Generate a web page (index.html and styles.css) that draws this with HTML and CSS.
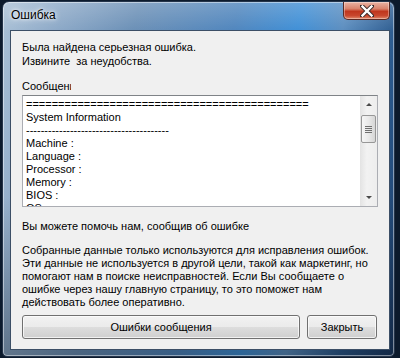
FILE: index.html
```html
<!DOCTYPE html>
<html lang="ru">
<head>
  <meta charset="UTF-8">
  <title>Ошибка</title>
  <link rel="stylesheet" href="styles.css">
</head>
<body>
  <div class="window">
    <div class="titlebar">
      <span class="title">Ошибка</span>
      <div class="close">
        <svg width="14" height="12" viewBox="0 0 14 12">
          <path d="M2 1 L12 11 M12 1 L2 11" stroke="#3a2a2a" stroke-width="4.2" stroke-linecap="square"/>
          <path d="M2.5 1.5 L11.5 10.5 M11.5 1.5 L2.5 10.5" stroke="#fff" stroke-width="2.4" stroke-linecap="square"/>
        </svg>
      </div>
    </div>
    <div class="client">
      <p class="intro">Была найдена серьезная ошибка.<br>Извините&nbsp; за неудобства.</p>
      <div class="label">Сообщения</div>
      <div class="textbox">
        <pre class="log">============================================
System Information
---------------------------------------
Machine :
Language :
Processor :
Memory :
BIOS :
OS :</pre>
        <div class="scrollbar">
          <div class="arrow up"></div>
          <div class="track">
            <div class="thumb"><span></span><span></span><span></span><span></span></div>
          </div>
          <div class="arrow down"></div>
        </div>
      </div>
      <p class="help">Вы можете помочь нам, сообщив об ошибке</p>
      <p class="info">Собранные данные только используются для исправления ошибок.<br>Эти данные не используется в другой цели, такой как маркетинг, но<br>помогают нам в поиске неисправностей. Если Вы сообщаете о<br>ошибке через нашу главную страницу, то это поможет нам<br>действовать более оперативно.</p>
      <div class="buttons">
        <button class="btn wide">Ошибки сообщения</button>
        <button class="btn">Закрыть</button>
      </div>
    </div>
  </div>
</body>
</html>
```

FILE: styles.css
```css
body {
  margin: 0;
  background: #0c1a2c;
  font-family: "Liberation Sans", Arial, sans-serif;
  font-size: 11px;
  color: #000;
}

.window {
  box-sizing: border-box;
  width: 393px;
  height: 356px;
  margin: 1px 0 0 2px;
  display: flex;
  flex-direction: column;
  border: 1px solid #24344a;
  border-radius: 7px 7px 5px 5px;
  box-shadow: inset 0 0 0 1px rgba(255, 255, 255, 0.45);
  background:
    linear-gradient(to bottom, rgba(255, 255, 255, 0.2), rgba(255, 255, 255, 0) 30px, rgba(0, 0, 0, 0) 55%, rgba(0, 0, 0, 0.3)),
    linear-gradient(100deg, #a9c0d6 0%, #8eaac8 12%, #6a8fb6 30%, #4f85bd 52%, #3f8fd6 66%, #5b8dbf 76%, #2b5a8e 88%, #1b3a64 100%);
}

.titlebar {
  height: 28px;
  display: flex;
  justify-content: space-between;
  align-items: flex-start;
}

.title {
  font-size: 12px;
  line-height: 15px;
  padding: 6px 0 0 8px;
  text-shadow: 0 0 6px #fff, 0 0 3px rgba(255, 255, 255, 0.9);
}

.close {
  width: 47px;
  height: 18px;
  margin-right: 4px;
  box-sizing: border-box;
  border: 1px solid #5a2a24;
  border-top: none;
  border-radius: 0 0 5px 5px;
  display: flex;
  align-items: center;
  justify-content: center;
  background: linear-gradient(to bottom, #e9b3a4 0%, #d9826b 40%, #c0361d 55%, #c8472d 80%, #e08a6c 100%);
  box-shadow: inset 0 0 0 1px rgba(255, 255, 255, 0.35);
}

.client {
  box-sizing: border-box;
  width: 380px;
  height: 320px;
  margin: 0 4px 6px 7px;
  padding: 9px 11px 0 11px;
  background: #f0f0f0;
  border: 1px solid #3c4f66;
}

.intro {
  margin: 0;
  line-height: 14px;
}

.label {
  width: 49px;
  overflow: hidden;
  white-space: nowrap;
  line-height: 14px;
  margin-top: 11px;
}

.textbox {
  box-sizing: border-box;
  height: 112px;
  margin-top: 2px;
  display: flex;
  background: #fff;
  border: 1px solid #abadb3;
  border-top-color: #7f8387;
  overflow: hidden;
}

.log {
  flex: 1;
  margin: 0;
  padding: 2px 0 0 3px;
  font-family: "Liberation Sans", Arial, sans-serif;
  font-size: 11px;
  line-height: 13px;
  overflow: hidden;
}

.scrollbar {
  width: 17px;
  display: flex;
  flex-direction: column;
  background: linear-gradient(to right, #e3e3e3, #f2f2f2 40%, #ededed);
}

.arrow {
  height: 17px;
  display: flex;
  align-items: center;
  justify-content: center;
}

.arrow::after {
  content: "";
  border-left: 3px solid transparent;
  border-right: 3px solid transparent;
}

.arrow.up::after {
  border-bottom: 3px solid #4a4a4a;
}

.arrow.down::after {
  border-top: 3px solid #4a4a4a;
}

.track {
  flex: 1;
  padding-top: 2px;
}

.thumb {
  box-sizing: border-box;
  width: 15px;
  height: 28px;
  margin-left: 1px;
  border: 1px solid #979797;
  border-radius: 2px;
  background: linear-gradient(to right, #f6f6f6, #e9e9e9 50%, #d6d6d6);
  display: flex;
  flex-direction: column;
  justify-content: center;
  align-items: center;
  gap: 1px;
}

.thumb span {
  width: 7px;
  height: 1px;
  background: #6f6f6f;
}

.help {
  margin: 12px 0 0;
  line-height: 14px;
}

.info {
  margin: 11px 0 0;
  line-height: 13px;
  white-space: nowrap;
}

.buttons {
  display: flex;
  gap: 7px;
  margin-top: 6px;
}

.btn {
  box-sizing: border-box;
  height: 24px;
  width: 70px;
  padding: 0;
  font-family: "Liberation Sans", Arial, sans-serif;
  font-size: 11px;
  color: #000;
  border: 1px solid #707070;
  border-radius: 3px;
  background: linear-gradient(to bottom, #f2f2f2 0%, #ebebeb 50%, #dddddd 51%, #cfcfcf 100%);
  box-shadow: inset 0 0 0 1px rgba(255, 255, 255, 0.7);
}

.btn.wide {
  width: 278px;
}
```
